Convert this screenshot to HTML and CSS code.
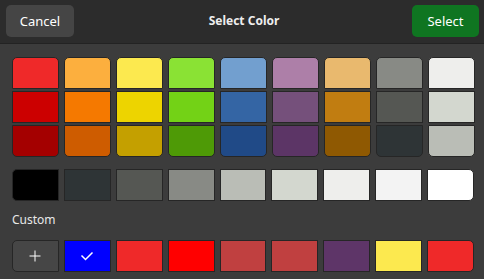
FILE: index.html
```html
<!DOCTYPE html>
<html lang="en">
<head>
    <meta charset="UTF-8">
    <meta name="viewport" content="width=device-width, initial-scale=1.0">
    <title>Select Color</title>
    <link rel="stylesheet" href="styles.css">
</head>
<body>
    <div class="header">
        <button class="btn btn-cancel">Cancel</button>
        <div class="title">Select Color</div>
        <button class="btn btn-select">Select</button>
    </div>
    <div class="content">
        <div class="palette">
            <div class="column">
                <div class="swatch" style="background:#ef2929"></div>
                <div class="swatch" style="background:#cc0000"></div>
                <div class="swatch" style="background:#a40000"></div>
            </div>
            <div class="column">
                <div class="swatch" style="background:#fcaf3e"></div>
                <div class="swatch" style="background:#f57900"></div>
                <div class="swatch" style="background:#ce5c00"></div>
            </div>
            <div class="column">
                <div class="swatch" style="background:#fce94f"></div>
                <div class="swatch" style="background:#edd400"></div>
                <div class="swatch" style="background:#c4a000"></div>
            </div>
            <div class="column">
                <div class="swatch" style="background:#8ae234"></div>
                <div class="swatch" style="background:#73d216"></div>
                <div class="swatch" style="background:#4e9a06"></div>
            </div>
            <div class="column">
                <div class="swatch" style="background:#729fcf"></div>
                <div class="swatch" style="background:#3465a4"></div>
                <div class="swatch" style="background:#204a87"></div>
            </div>
            <div class="column">
                <div class="swatch" style="background:#ad7fa8"></div>
                <div class="swatch" style="background:#75507b"></div>
                <div class="swatch" style="background:#5c3566"></div>
            </div>
            <div class="column">
                <div class="swatch" style="background:#e9b96e"></div>
                <div class="swatch" style="background:#c17d11"></div>
                <div class="swatch" style="background:#8f5902"></div>
            </div>
            <div class="column">
                <div class="swatch" style="background:#888a85"></div>
                <div class="swatch" style="background:#555753"></div>
                <div class="swatch" style="background:#2e3436"></div>
            </div>
            <div class="column">
                <div class="swatch" style="background:#eeeeec"></div>
                <div class="swatch" style="background:#d3d7cf"></div>
                <div class="swatch" style="background:#babdb6"></div>
            </div>
        </div>

        <div class="row grays">
            <div class="swatch" style="background:#000000"></div>
            <div class="swatch" style="background:#2e3436"></div>
            <div class="swatch" style="background:#555753"></div>
            <div class="swatch" style="background:#888a85"></div>
            <div class="swatch" style="background:#babdb6"></div>
            <div class="swatch" style="background:#d3d7cf"></div>
            <div class="swatch" style="background:#eeeeec"></div>
            <div class="swatch" style="background:#f3f3f3"></div>
            <div class="swatch" style="background:#ffffff"></div>
        </div>

        <div class="label">Custom</div>

        <div class="row custom">
            <div class="swatch add">
                <svg width="12" height="12" viewBox="0 0 12 12">
                    <path d="M6 0.5v11M0.5 6h11" stroke="#ffffff" stroke-width="1" fill="none"/>
                </svg>
            </div>
            <div class="swatch" style="background:#0000ff">
                <svg width="14" height="10" viewBox="0 0 14 10">
                    <path d="M1.5 4.5l4 4 7-7" stroke="#ffffff" stroke-width="1.5" fill="none"/>
                </svg>
            </div>
            <div class="swatch" style="background:#ef2929"></div>
            <div class="swatch" style="background:#ff0000"></div>
            <div class="swatch" style="background:#c04040"></div>
            <div class="swatch" style="background:#c04040"></div>
            <div class="swatch" style="background:#5e3568"></div>
            <div class="swatch" style="background:#fce94f"></div>
            <div class="swatch" style="background:#ef2929"></div>
        </div>
    </div>
</body>
</html>
```

FILE: styles.css
```css
body {
    margin: 0;
    background-color: #3c3c3c;
    font-family: "Noto Sans", "Open Sans", sans-serif;
    color: #eeeeee;
}
.header {
    height: 43px;
    background-color: #2c2c2c;
    border-bottom: 1px solid #232323;
    display: flex;
    align-items: flex-start;
    justify-content: space-between;
    padding: 5px 5px 0 6px;
    box-sizing: border-box;
    height: 44px;
}
.btn {
    height: 32px;
    border: none;
    border-radius: 5px;
    font-family: inherit;
    font-size: 13px;
    color: #ffffff;
    padding: 0;
}
.btn-cancel {
    width: 68px;
    background-color: #454545;
}
.btn-select {
    width: 67px;
    background-color: #0f7521;
}
.title {
    font-size: 12px;
    font-weight: bold;
    line-height: 32px;
    padding-left: 2px;
}
.content {
    padding: 13px 10px 0 12px;
}
.palette {
    display: flex;
    gap: 5px;
}
.column {
    display: flex;
    flex-direction: column;
    gap: 2px;
}
.swatch {
    width: 47px;
    height: 32px;
    box-sizing: border-box;
    border: 1px solid #262626;
    display: flex;
    align-items: center;
    justify-content: center;
}
.column .swatch:first-child {
    border-radius: 5px 5px 0 0;
}
.column .swatch:last-child {
    border-radius: 0 0 5px 5px;
}
.row {
    display: flex;
    gap: 5px;
}
.row .swatch:first-child {
    border-radius: 5px 0 0 5px;
}
.row .swatch:last-child {
    border-radius: 0 5px 5px 0;
}
.grays {
    margin-top: 12px;
}
.label {
    font-size: 12px;
    color: #e8e8e8;
    margin-top: 11px;
    line-height: 16px;
}
.custom {
    margin-top: 12px;
}
.add {
    background-color: #464646;
}
```
